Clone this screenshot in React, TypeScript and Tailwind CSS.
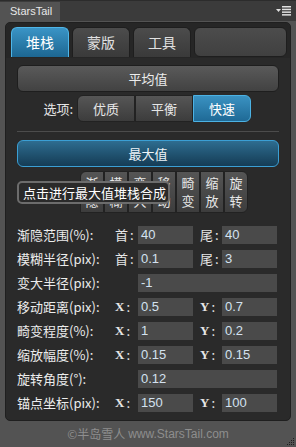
import React from "react";

const cjk = "font-['Noto_Sans_CJK_SC',sans-serif]";

const Seg = ({ label, active, first, last }: { label: string; active?: boolean; first?: boolean; last?: boolean }) => (
  <div
    className={`flex-1 h-full flex items-center justify-center text-[13px] border ${
      active
        ? "bg-gradient-to-b from-[#3a92c2] to-[#1f6a96] border-[#4cb2e4] text-white"
        : "bg-gradient-to-b from-[#565656] to-[#3c3c3c] border-[#222] text-[#e6e6e6]"
    } ${first ? "rounded-l-[6px]" : ""} ${last ? "rounded-r-[6px]" : ""}`}
  >
    {label}
  </div>
);

const VBtn = ({ a, b, first, last }: { a: string; b: string; first?: boolean; last?: boolean }) => (
  <div
    className={`w-[24px] h-full flex flex-col items-center justify-center leading-[18px] text-[13px] text-[#e6e6e6] bg-gradient-to-b from-[#555] to-[#3d3d3d] border border-[#222] ${
      first ? "rounded-tl-[6px]" : ""
    } ${last ? "rounded-tr-[6px] rounded-br-[6px]" : ""}`}
  >
    <span>{a}</span>
    <span>{b}</span>
  </div>
);

const Input = ({ v, wide }: { v: string; wide?: boolean }) => (
  <div
    className={`${wide ? "w-[139px]" : "w-[55px]"} h-[18px] bg-[#4a4a4a] text-[#d4e2f0] text-[13px] leading-[18px] pl-[3px] font-['Liberation_Sans',sans-serif]`}
  >
    {v}
  </div>
);

const Pre = ({ t, serif, w }: { t: string; serif?: boolean; w: string }) => (
  <div className={`${w} text-[13px] text-[#e6e6e6] flex items-center`}>
    {serif ? (
      <span className="font-['Liberation_Serif',serif] font-bold">{t}</span>
    ) : (
      <span>{t}</span>
    )}
    <span className="ml-[2px]">:</span>
  </div>
);

type Row = { label: string; p1?: string; v1: string; p2?: string; v2?: string; serif?: boolean };

const rows: Row[] = [
  { label: "渐隐范围(%):", p1: "首", v1: "40", p2: "尾", v2: "40" },
  { label: "模糊半径(pix):", p1: "首", v1: "0.1", p2: "尾", v2: "3" },
  { label: "变大半径(pix):", v1: "-1" },
  { label: "移动距离(pix):", p1: "X", v1: "0.5", p2: "Y", v2: "0.7", serif: true },
  { label: "畸变程度(%):", p1: "X", v1: "1", p2: "Y", v2: "0.2", serif: true },
  { label: "缩放幅度(%):", p1: "X", v1: "0.15", p2: "Y", v2: "0.15", serif: true },
  { label: "旋转角度(°):", v1: "0.12" },
  { label: "锚点坐标(pix):", p1: "X", v1: "150", p2: "Y", v2: "100", serif: true },
];

export default function App() {
  return (
    <div className={`w-[296px] h-[447px] bg-[#535353] flex flex-col ${cjk} overflow-hidden`}>
      {/* header */}
      <div className="h-[21px] bg-[#3b3b3b] border-t border-[#2c2c2c] flex items-end justify-between">
        <div className="h-[19px] w-[60px] bg-[#535353] pl-[10px] text-[11px] leading-[19px] text-[#e8e8e8] font-['Liberation_Sans',sans-serif]">
          StarsTail
        </div>
        <svg width="16" height="10" viewBox="0 0 16 10" className="mb-[5px] mr-[4px]">
          <path d="M0 3h5l-2.5 3z" fill="#e0e0e0" />
          <rect x="6" y="0" width="9" height="1.5" fill="#e0e0e0" />
          <rect x="6" y="2.7" width="9" height="1.5" fill="#e0e0e0" />
          <rect x="6" y="5.4" width="9" height="1.5" fill="#e0e0e0" />
          <rect x="6" y="8.1" width="9" height="1.5" fill="#e0e0e0" />
        </svg>
      </div>

      {/* main dark box */}
      <div className="mx-[5px] mt-[1px] h-[399px] bg-[#2a2a2a] rounded-[5px] border border-[#1f1f1f] flex flex-col">
        {/* tabs */}
        <div className="flex gap-[3px] pl-[5px] pr-[3px] pt-[4px] h-[35px] bg-[#262626] rounded-t-[5px]">
          <div className="w-[58px] h-[30px] rounded-t-[6px] bg-gradient-to-b from-[#3a94c6] to-[#1d6792] border border-[#4fb6e8] border-b-0 flex items-center justify-center text-[14px] text-white">
            堆栈
          </div>
          <div className="w-[58px] h-[30px] rounded-t-[6px] bg-gradient-to-b from-[#4c4c4c] to-[#3a3a3a] border border-[#1e1e1e] border-b-0 flex items-center justify-center text-[14px] text-[#e0e0e0]">
            蒙版
          </div>
          <div className="w-[58px] h-[30px] rounded-t-[6px] bg-gradient-to-b from-[#4c4c4c] to-[#3a3a3a] border border-[#1e1e1e] border-b-0 flex items-center justify-center text-[14px] text-[#e0e0e0]">
            工具
          </div>
          <div className="flex-1 h-[30px] rounded-[6px] bg-gradient-to-b from-[#4c4c4c] to-[#404040] border border-[#1e1e1e]"></div>
        </div>

        {/* content */}
        <div className="flex-1 px-[11px] pt-[7px] flex flex-col">
          <div className="h-[27px] rounded-[6px] bg-gradient-to-b from-[#5a5a5a] to-[#424242] border border-[#1e1e1e] flex items-center justify-center text-[13px] text-[#ececec]">
            平均值
          </div>

          <div className="flex items-center h-[27px] mt-[3px]">
            <div className="w-[60px] text-right pr-[4px] text-[13px] text-[#e6e6e6]">选项:</div>
            <div className="w-[174px] h-full flex">
              <Seg label="优质" first />
              <Seg label="平衡" />
              <Seg label="快速" active last />
            </div>
          </div>

          <div className="h-px bg-[#4c4c4c] mt-[9px]"></div>

          <div className="h-[27px] mt-[8px] rounded-[6px] bg-gradient-to-b from-[#2e6d90] to-[#153c55] border border-[#3b9fd4] flex items-center justify-center text-[13px] text-[#eef4f8]">
            最大值
          </div>

          <div className="relative h-[42px] mt-[4px]">
            <div className="ml-[63px] h-full flex">
              <VBtn a="渐" b="隐" first />
              <VBtn a="模" b="糊" />
              <VBtn a="变" b="大" />
              <VBtn a="移" b="动" />
              <VBtn a="畸" b="变" />
              <VBtn a="缩" b="放" />
              <VBtn a="旋" b="转" last />
            </div>
            <div className="absolute left-0 top-[10px] w-[153px] h-[23px] rounded-[5px] bg-[#2a2a2a] border-2 border-[#6c6c6c] flex items-center pl-[4px] text-[13px] text-white whitespace-nowrap">
              点击进行最大值堆栈合成
            </div>
          </div>

          <div className="mt-[13px] flex flex-col gap-[6px]">
            {rows.map((r) => (
              <div key={r.label} className="flex items-center h-[18px]">
                <div className="w-[98px] text-[13px] text-[#ececec] whitespace-nowrap">{r.label}</div>
                {r.p1 ? <Pre t={r.p1} serif={r.serif} w="w-[23px]" /> : <div className="w-[23px]"></div>}
                <Input v={r.v1} wide={!r.p2} />
                {r.p2 && (
                  <>
                    <div className="w-[7px]"></div>
                    <Pre t={r.p2} serif={r.serif} w="w-[22px]" />
                    <Input v={r.v2 || ""} />
                  </>
                )}
              </div>
            ))}
          </div>
        </div>
      </div>

      {/* footer */}
      <div className="relative flex-1 flex items-center justify-center text-[12px] text-[#8e8e8e]">
        <span>©半岛雪人 </span>
        <span className="font-['Liberation_Sans',sans-serif] ml-[3px]">www.StarsTail.com</span>
        <svg width="8" height="8" viewBox="0 0 8 8" className="absolute right-[1px] bottom-[1px]">
          <rect x="6" y="0" width="1" height="1" fill="#1e1e1e" />
          <rect x="4" y="2" width="1" height="1" fill="#1e1e1e" />
          <rect x="6" y="2" width="1" height="1" fill="#1e1e1e" />
          <rect x="2" y="4" width="1" height="1" fill="#1e1e1e" />
          <rect x="4" y="4" width="1" height="1" fill="#1e1e1e" />
          <rect x="6" y="4" width="1" height="1" fill="#1e1e1e" />
          <rect x="0" y="6" width="1" height="1" fill="#1e1e1e" />
          <rect x="2" y="6" width="1" height="1" fill="#1e1e1e" />
          <rect x="4" y="6" width="1" height="1" fill="#1e1e1e" />
          <rect x="6" y="6" width="1" height="1" fill="#1e1e1e" />
        </svg>
      </div>
    </div>
  );
}
